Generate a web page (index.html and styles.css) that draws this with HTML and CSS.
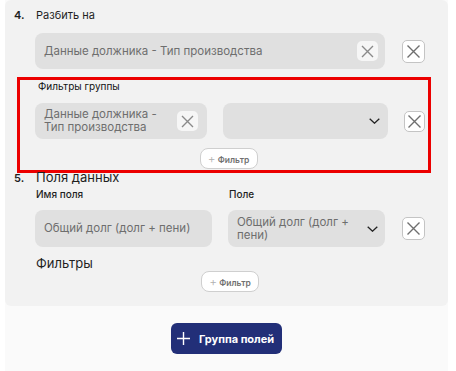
FILE: index.html
```html
<!DOCTYPE html>
<html lang="ru">
<head>
    <meta charset="utf-8" />
    <title>Группы полей</title>
    <link rel="stylesheet" href="styles.css">
</head>
<body>
    <div class="page">
        <div class="panel">
            <!-- Шаг 4 -->
            <section class="step">
                <div class="step-head">
                    <span class="step-num">4.</span>
                    <span class="step-title">Разбить на</span>
                </div>
                <div class="row row-split">
                    <div class="field field-split">
                        <span class="field-text">Данные должника - Тип производства</span>
                        <button class="clear" type="button">
                            <svg width="13" height="13" viewBox="0 0 13 13"><path d="M1 1L12 12M12 1L1 12" stroke="#8a8a8a" stroke-width="1.4" fill="none"/></svg>
                        </button>
                    </div>
                    <button class="remove" type="button">
                        <svg width="15" height="15" viewBox="0 0 15 15"><path d="M1.5 1.5L13.5 13.5M13.5 1.5L1.5 13.5" stroke="#6f6f6f" stroke-width="1.4" fill="none"/></svg>
                    </button>
                </div>
            </section>

            <!-- Фильтры группы -->
            <section class="group-filters">
                <div class="sub-label">Фильтры группы</div>
                <div class="row">
                    <div class="field field-group">
                        <span class="field-text">Данные должника -<br>Тип производства</span>
                        <button class="clear" type="button">
                            <svg width="13" height="13" viewBox="0 0 13 13"><path d="M1 1L12 12M12 1L1 12" stroke="#8a8a8a" stroke-width="1.4" fill="none"/></svg>
                        </button>
                    </div>
                    <div class="field field-select">
                        <span class="field-text"></span>
                        <svg class="chevron" width="11" height="6" viewBox="0 0 11 6"><path d="M0.7 0.7L5.5 5.2L10.3 0.7" stroke="#222" stroke-width="1.3" fill="none"/></svg>
                    </div>
                    <button class="remove remove-sm" type="button">
                        <svg width="15" height="15" viewBox="0 0 15 15"><path d="M1.5 1.5L13.5 13.5M13.5 1.5L1.5 13.5" stroke="#6f6f6f" stroke-width="1.4" fill="none"/></svg>
                    </button>
                </div>
                <div class="add-row">
                    <button class="add-filter" type="button"><span class="plus">+</span> Фильтр</button>
                </div>
            </section>

            <!-- Шаг 5 -->
            <section class="step step-fields">
                <div class="step-head">
                    <span class="step-num">5.</span>
                    <span class="step-title step-title-lg">Поля данных</span>
                </div>
                <div class="col-labels">
                    <span class="col-name">Имя поля</span>
                    <span>Поле</span>
                </div>
                <div class="row">
                    <div class="field field-name">
                        <span class="field-text">Общий долг (долг + пени)</span>
                    </div>
                    <div class="field field-value">
                        <span class="field-text">Общий долг (долг +<br>пени)</span>
                        <svg class="chevron" width="11" height="6" viewBox="0 0 11 6"><path d="M0.7 0.7L5.5 5.2L10.3 0.7" stroke="#222" stroke-width="1.3" fill="none"/></svg>
                    </div>
                    <button class="remove" type="button">
                        <svg width="15" height="15" viewBox="0 0 15 15"><path d="M1.5 1.5L13.5 13.5M13.5 1.5L1.5 13.5" stroke="#6f6f6f" stroke-width="1.4" fill="none"/></svg>
                    </button>
                </div>
                <div class="filters-title">Фильтры</div>
                <div class="add-row add-row-fields">
                    <button class="add-filter" type="button"><span class="plus">+</span> Фильтр</button>
                </div>
            </section>
        </div>

        <div class="actions">
            <button class="btn-primary" type="button">
                <svg width="13" height="13" viewBox="0 0 13 13"><path d="M6.5 0V13M0 6.5H13" stroke="#fff" stroke-width="1.4" fill="none"/></svg>
                Группа полей
            </button>
        </div>
    </div>
</body>
</html>
```

FILE: styles.css
```css
:root {
    --panel-bg: #f2f2f2;
    --field-bg: #e0e0e0;
    --text-muted: #6e6e6e;
    --primary: #222f78;
    --highlight: #ec0000;
}

* {
    box-sizing: border-box;
    margin: 0;
    padding: 0;
}

body {
    background-color: #fff;
    font-family: Inter, "Noto Sans", sans-serif;
    color: #1f1f1f;
}

button {
    font-family: inherit;
    cursor: pointer;
}

.page {
    margin-left: 5px;
    width: 443px;
    min-height: 371px;
    background-color: #fafafa;
}

.panel {
    background-color: var(--panel-bg);
    border-radius: 6px;
    padding: 8px 0 14px;
}

/* Заголовки шагов */
.step-head {
    display: flex;
    align-items: baseline;
    padding-left: 9px;
    line-height: 14px;
}

.step-num {
    width: 22px;
    font-size: 11px;
    font-weight: 600;
}

.step-title {
    font-size: 11px;
}

.step-title-lg {
    font-size: 13px;
    line-height: 16px;
}

/* Строки с полями */
.row {
    display: flex;
    align-items: center;
    gap: 16px;
}

.step .row {
    margin-left: 30px;
}

.row-split {
    margin-top: 11px;
    gap: 17px;
}

.field {
    display: flex;
    align-items: center;
    justify-content: space-between;
    gap: 4px;
    height: 36px;
    padding: 0 7px 0 9px;
    background-color: var(--field-bg);
    border-radius: 8px;
    color: var(--text-muted);
    font-size: 11.5px;
    line-height: 13px;
}

.field-text {
    min-width: 0;
    white-space: nowrap;
}

.field-split {
    width: 350px;
}

.field-group {
    width: 172px;
    padding-right: 9px;
}

.field-select {
    width: 166px;
    padding-right: 8px;
}

.field-name {
    width: 177px;
    height: 37px;
}

.field-value {
    width: 157px;
    height: 37px;
    padding-right: 7px;
}

.chevron {
    flex-shrink: 0;
}

.step-fields .row {
    gap: 16px;
}

.step-fields .remove {
    margin-left: 1px;
}

.clear {
    display: flex;
    align-items: center;
    justify-content: center;
    flex-shrink: 0;
    width: 21px;
    height: 20px;
    border: none;
    border-radius: 5px;
    background-color: #f6f6f6;
}

.remove {
    display: flex;
    align-items: center;
    justify-content: center;
    width: 23px;
    height: 23px;
    border: 1px solid #c4c4c4;
    border-radius: 5px;
    background-color: #fff;
}

.remove-sm {
    width: 21px;
    height: 21px;
}

/* Фильтры группы */
.group-filters {
    margin: 8px 17px 0 12px;
    padding: 0 3px 1px 15px;
    border: 3px solid var(--highlight);
}

.sub-label {
    padding-left: 3px;
    font-size: 10px;
    font-weight: 400;
    line-height: 12px;
    color: #111;
}

.group-filters .row {
    margin-top: 11px;
}

.add-row {
    display: flex;
    justify-content: center;
    margin-top: 9px;
    padding-right: 3px;
}

.add-filter {
    width: 58px;
    height: 21px;
    border: 1px solid #cfcfcf;
    border-radius: 8px;
    background-color: #fff;
    color: #707070;
    font-size: 8.5px;
    font-weight: 600;
}

.add-filter .plus {
    color: #b0b0b0;
    font-size: 12px;
    font-weight: 300;
}

/* Поля данных */
.step-fields {
    margin-top: -4px;
}

.step-fields .step-head {
    line-height: 16px;
}

.col-labels {
    display: flex;
    margin: 2px 0 0 31px;
    font-size: 10px;
    font-weight: 500;
    line-height: 12px;
}

.col-name {
    width: 193px;
}

.step-fields .row {
    margin-top: 10px;
}

.filters-title {
    margin: 8px 0 0 31px;
    font-size: 13px;
    line-height: 16px;
}

.add-row-fields {
    margin: 0 23px 0 30px;
    padding-right: 0;
}

/* Кнопка внизу */
.actions {
    display: flex;
    justify-content: center;
    padding-top: 17px;
}

.btn-primary {
    display: flex;
    align-items: center;
    gap: 9px;
    width: 111px;
    height: 31px;
    padding-left: 6px;
    border: none;
    border-radius: 6px;
    background-color: var(--primary);
    color: #fff;
    font-size: 11px;
    font-weight: 700;
}
```
